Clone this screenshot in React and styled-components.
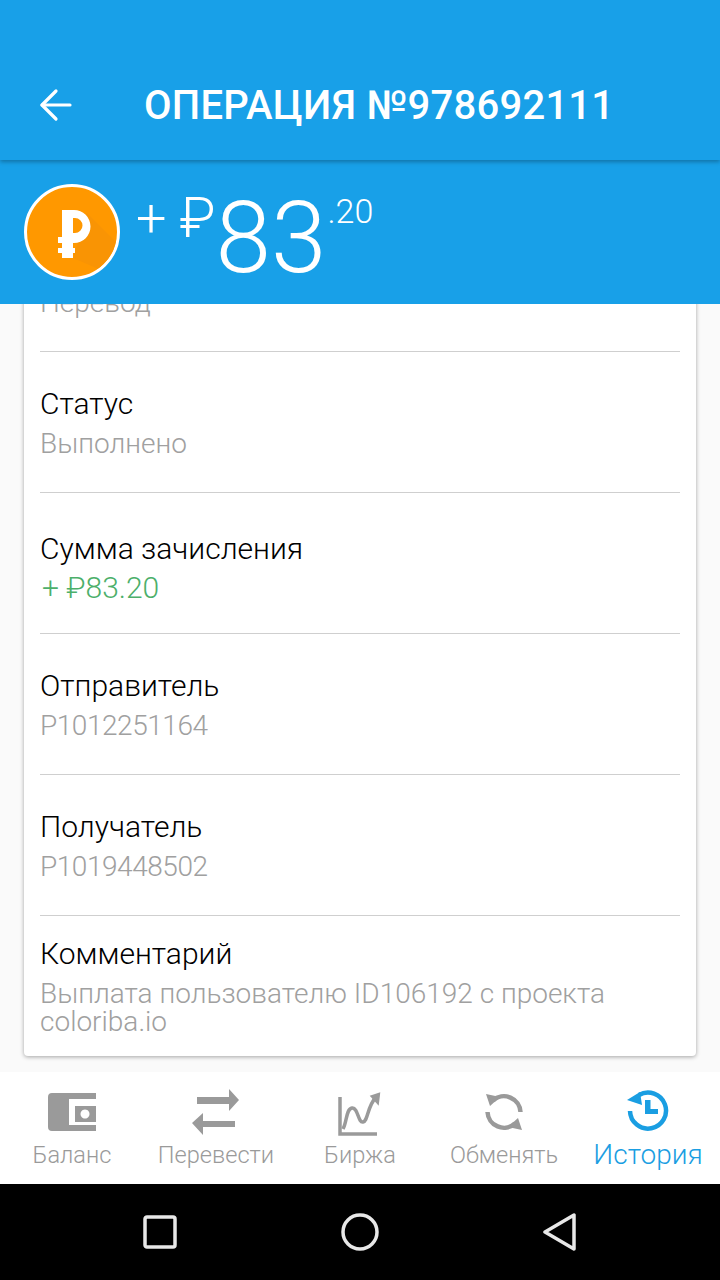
import React from 'react';
import styled, { createGlobalStyle } from 'styled-components';
import { ArrowLeft } from 'lucide-react';

const GlobalStyle = createGlobalStyle`
  html, body {
    margin: 0;
    padding: 0;
    background: #fafafa;
  }
  * {
    box-sizing: border-box;
  }
`;

const Screen = styled.div`
  width: 720px;
  height: 1280px;
  display: flex;
  flex-direction: column;
  overflow: hidden;
  font-family: Roboto, "Noto Sans", sans-serif;
  background: #fafafa;
`;

const Header = styled.header`
  height: 160px;
  flex: none;
  display: flex;
  align-items: center;
  padding: 50px 0 0 32px;
  background: #18a0e8;
  color: #fff;
  box-shadow: 0 2px 4px rgba(0, 0, 0, 0.28);
  position: relative;
  z-index: 2;
`;

const Title = styled.h1`
  margin: 2px 0 0 64px;
  font-size: 40px;
  font-weight: 500;
  line-height: 46px;
  letter-spacing: 0.25px;
  white-space: nowrap;
`;

const AmountBand = styled.section`
  height: 144px;
  flex: none;
  display: flex;
  align-items: flex-start;
  padding: 24px 0 0 24px;
  background: #18a0e8;
  color: #fff;
  position: relative;
  z-index: 1;
`;

const Coin = styled.div`
  width: 96px;
  height: 96px;
  flex: none;
  overflow: hidden;
  border: 3px solid #fff;
  border-radius: 50%;
  background: #ff9800;
`;

const Sign = styled.span`
  margin: 5px 0 0 16px;
  font-size: 54px;
  font-weight: 300;
  line-height: 60px;
`;

const Currency = styled.span`
  margin: 4px 0 0 13px;
  font-size: 56px;
  font-weight: 300;
  line-height: 60px;
`;

const Whole = styled.span`
  margin: -4px 0 0 0;
  font-size: 100px;
  font-weight: 300;
  line-height: 116px;
`;

const Cents = styled.span`
  margin: 7px 0 0 1px;
  font-size: 34px;
  font-weight: 300;
  line-height: 40px;
`;

const Content = styled.main`
  flex: 1;
  min-height: 0;
  overflow: hidden;
  padding: 0 24px;
`;

const Card = styled.div`
  margin-top: -15px;
  padding: 0 16px;
  border-radius: 4px;
  background: #fff;
  box-shadow: 0 1px 4px rgba(0, 0, 0, 0.35);
`;

const rowPadding = { first: '0', compact: '20px', tall: '38px' };
const rowHeight = { first: '63px', compact: '140px' };

const Row = styled.div`
  height: ${({ $kind }) => rowHeight[$kind] || '141px'};
  padding-top: ${({ $kind }) => rowPadding[$kind] || '34px'};
  border-bottom: ${({ $kind }) => ($kind === 'compact' ? 'none' : '1px solid #cfcfcf')};
`;

const Label = styled.div`
  font-size: 30px;
  font-weight: 300;
  line-height: 36px;
  color: #000;
`;

const Value = styled.div`
  margin-top: 8px;
  font-size: 28px;
  font-weight: 300;
  line-height: 28px;
  color: #a0a0a0;
  letter-spacing: ${({ $tight }) => ($tight ? '-0.45px' : '0')};

  ${Row}:first-child & {
    margin-top: 0;
  }
`;

const AccentValue = styled(Value)`
  margin-top: 7px;
  padding-left: 2px;
  font-size: 30px;
  color: #4caf6a;
`;

const TabBar = styled.nav`
  height: 112px;
  flex: none;
  display: grid;
  grid-template-columns: repeat(5, 144px);
  background: #fff;
`;

const Tab = styled.div`
  display: flex;
  flex-direction: column;
  align-items: center;
  padding-top: 16px;
  color: ${({ $active }) => ($active ? '#1a9ee2' : '#9a9a9a')};
`;

const TabIcon = styled.div`
  height: 48px;
  display: flex;
  align-items: center;
  justify-content: center;
`;

const TabLabel = styled.span`
  margin-top: 3px;
  font-size: ${({ $active }) => ($active ? '28px' : '23.6px')};
  font-weight: 300;
  line-height: 32px;
  white-space: nowrap;
`;

const NavBar = styled.div`
  height: 96px;
  flex: none;
  display: grid;
  grid-template-columns: repeat(3, 200px);
  justify-content: center;
  align-items: center;
  justify-items: center;
  background: #000;
`;

const CoinIcon = () => (
  <svg width="90" height="90" viewBox="0 0 90 90">
    <path d="M46 71 L90 90 L90 56 L60 26 Z" fill="#f99404" />
    <path
      fillRule="evenodd"
      d="M35 23H47a16.500 16.500 0 0 1 0 33H46V71H35zM46 31v15h2a7.500 7.500 0 0 0 0-15z"
      fill="#fff"
    />
    <path d="M31 50h15v6H31zM31 61h17v5H31z" fill="#fff" />
  </svg>
);

const WalletIcon = () => (
  <svg width="48" height="38" viewBox="0 0 48 38" fill="currentColor">
    <path d="M48 0H4a4 4 0 0 0-4 4v30a4 4 0 0 0 4 4h44v-6H21V6h27z" />
    <path fillRule="evenodd" d="M27 13h21v16H27zM37 16.500a4.500 4.500 0 1 0 .01 0z" />
  </svg>
);

const TransferIcon = () => (
  <svg width="48" height="46" viewBox="0 0 48 46" fill="currentColor">
    <path d="M5 8h32V0l10 11-10 11v-7H5zM43 26v6H11v-8L0 34l11 12v-8h32v-12z" />
  </svg>
);

const ChartIcon = () => (
  <svg width="44" height="48" viewBox="0 0 44 48" fill="none" stroke="currentColor">
    <path d="M2 9V46H39" strokeWidth="3.500" />
    <path d="M5 41C9 34 8 21 14 20S20 35 25 34 29 19 38 9" strokeWidth="3.500" />
    <path d="M31.700 7.700L42.300 4.300L40.700 17.700z" fill="currentColor" stroke="none" />
  </svg>
);

const SyncIcon = () => (
  <svg width="44" height="44" viewBox="0 0 44 44" fill="none">
    <path d="M11 10.500A16.500 16.500 0 0 1 38.500 22" stroke="currentColor" strokeWidth="4.500" />
    <path d="M33 33.500A16.500 16.500 0 0 1 5.500 22" stroke="currentColor" strokeWidth="4.500" />
    <path d="M4 4l14 3-10 9zM40 40l-14-3 10-9z" fill="currentColor" />
  </svg>
);

const HistoryIcon = () => (
  <svg width="44" height="44" viewBox="0 0 44 44" fill="none">
    <path d="M13 5A18 18 0 1 1 4 21" stroke="currentColor" strokeWidth="4.500" />
    <path d="M1 10L14 2L16 15z" fill="currentColor" />
    <path d="M19 10h5.500v9H32v5H19z" fill="currentColor" />
  </svg>
);

const SquareIcon = () => (
  <svg width="34" height="34" viewBox="0 0 34 34" fill="none">
    <rect x="2" y="2" width="30" height="30" rx="2" stroke="#e8e8e8" strokeWidth="3.500" />
  </svg>
);

const CircleIcon = () => (
  <svg width="38" height="38" viewBox="0 0 38 38" fill="none">
    <circle cx="19" cy="19" r="17" stroke="#e8e8e8" strokeWidth="3.500" />
  </svg>
);

const TriangleIcon = () => (
  <svg width="34" height="38" viewBox="0 0 34 38" fill="none">
    <path d="M31 2v34L2 19z" stroke="#e8e8e8" strokeWidth="3.500" strokeLinejoin="round" />
  </svg>
);

const details = [
  { value: 'Перевод', kind: 'first' },
  { label: 'Статус', value: 'Выполнено' },
  { label: 'Сумма зачисления', value: '+ ₽83.20', kind: 'tall' },
  { label: 'Отправитель', value: 'P1012251164', tight: true },
  { label: 'Получатель', value: 'P1019448502', tight: true },
  { label: 'Комментарий', value: 'Выплата пользователю ID106192 с проекта coloriba.io', kind: 'compact' },
];

const tabs = [
  { label: 'Баланс', Icon: WalletIcon },
  { label: 'Перевести', Icon: TransferIcon },
  { label: 'Биржа', Icon: ChartIcon },
  { label: 'Обменять', Icon: SyncIcon },
  { label: 'История', Icon: HistoryIcon, active: true },
];

const App = () => (
  <Screen>
    <GlobalStyle />
    <Header>
      <ArrowLeft size={48} strokeWidth={1.6} />
      <Title>ОПЕРАЦИЯ №978692111</Title>
    </Header>
    <AmountBand>
      <Coin>
        <CoinIcon />
      </Coin>
      <Sign>+</Sign>
      <Currency>₽</Currency>
      <Whole>83</Whole>
      <Cents>.20</Cents>
    </AmountBand>
    <Content>
      <Card>
        {details.map((item) => (
          <Row key={item.value} $kind={item.kind}>
            {item.label && <Label>{item.label}</Label>}
            {item.kind === 'tall' ? (
              <AccentValue>{item.value}</AccentValue>
            ) : (
              <Value $tight={item.tight}>{item.value}</Value>
            )}
          </Row>
        ))}
      </Card>
    </Content>
    <TabBar>
      {tabs.map(({ label, Icon, active }) => (
        <Tab key={label} $active={active}>
          <TabIcon>
            <Icon />
          </TabIcon>
          <TabLabel $active={active}>{label}</TabLabel>
        </Tab>
      ))}
    </TabBar>
    <NavBar>
      <SquareIcon />
      <CircleIcon />
      <TriangleIcon />
    </NavBar>
  </Screen>
);

export default App;
